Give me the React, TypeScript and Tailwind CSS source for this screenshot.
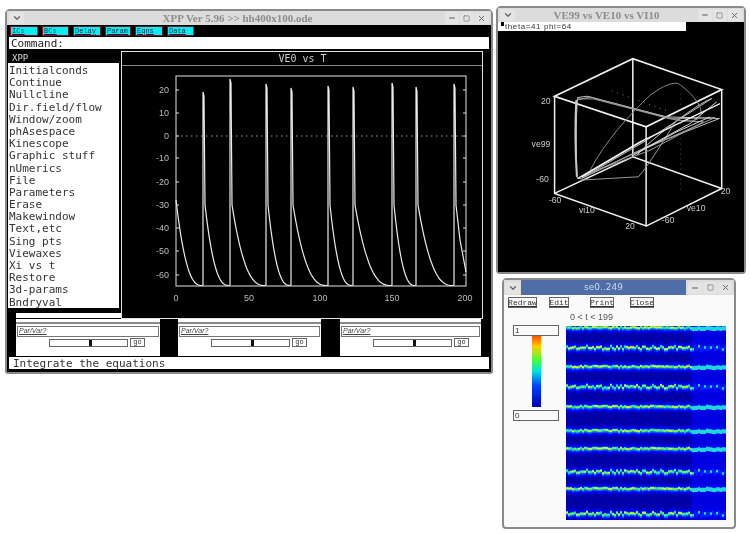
import React from 'react';
import { ChevronDown, Minus, Square, X } from 'lucide-react';

const menuItems = [
  'Initialconds', 'Continue', 'Nullcline', 'Dir.field/flow', 'Window/zoom', 'phAsespace', 'Kinescope',
  'Graphic stuff', 'nUmerics', 'File', 'Parameters', 'Erase', 'Makewindow', 'Text,etc', 'Sing pts',
  'Viewaxes', 'Xi vs t', 'Restore', '3d-params', 'Bndryval',
];

const toolbarItems = [
  { name: 'ICs', w: 'w-[28px]' },
  { name: 'BCs', w: 'w-[27px]' },
  { name: 'Delay', w: 'w-[28px]' },
  { name: 'Param', w: 'w-[26px]' },
  { name: 'Eqns', w: 'w-[28px]' },
  { name: 'Data', w: 'w-[27px]' },
];

// spike x position and peak y, in page pixels
const spikes = [
  [204, 92], [231, 79], [267, 84], [292, 88], [329, 86], [354, 87], [393, 83], [417, 87], [455, 84],
];

function voltagePath() {
  const decay = (x0: number, x1: number, y0: number) => {
    let seg = '';
    for (let x = x0; x <= x1; x += 1.5) {
      const t = (x - x0) / (x1 - x0);
      const y = 285.5 - (285.5 - y0) * Math.pow(1 - t, 2.6);
      seg += ` L${x} ${y.toFixed(1)}`;
    }
    return seg;
  };
  let d = 'M177 200' + decay(177, 203, 200);
  spikes.forEach(([x, top], i) => {
    d += ` L${x} 285 L${x} ${top} L${x + 1} ${top + 4} L${x + 2} 205`;
    if (i < spikes.length - 1) d += decay(x + 2, spikes[i + 1][0] - 1, 205);
    else d += ' L461 240 L467 272';
  });
  return d;
}

function TitleButtons() {
  return (
    <div className="flex items-center gap-[1px]">
      <span className="flex h-[12px] w-[14px] items-center justify-center rounded-[2px] bg-[#e4e4e4]"><Minus size={8} strokeWidth={3} className="text-[#555]" /></span>
      <span className="flex h-[12px] w-[14px] items-center justify-center rounded-[2px] bg-[#e4e4e4]"><Square size={7} strokeWidth={2} className="text-[#666]" /></span>
      <span className="flex h-[12px] w-[14px] items-center justify-center rounded-[2px] bg-[#e4e4e4]"><X size={9} strokeWidth={2.5} className="text-[#666]" /></span>
    </div>
  );
}

function TitleMenu() {
  return (
    <span className="flex h-[12px] w-[15px] items-center justify-center rounded-[2px] bg-[#e4e4e4]">
      <ChevronDown size={10} strokeWidth={3} className="text-[#666]" />
    </span>
  );
}

function ParSlider({ width, thumb }: { width: string; thumb: string }) {
  return (
    <div className={`flex h-[37px] ${width} shrink-0 flex-col bg-white`}>
      <div className="h-[5px] border-b-[2px] border-[#888] bg-white" />
      <div className="mx-[1px] mt-[2px] flex h-[11px] items-center border border-[#777] pl-[1px] font-['Liberation_Sans',sans-serif] text-[7px] italic text-[#444] underline">
        Par/Var?
      </div>
      <div className="mt-[1px] flex items-center">
        <div className={`ml-[33px] flex h-[8px] w-[79px] border border-[#666] ${thumb}`}>
          <span className="h-full w-[3px] bg-[#111]" />
        </div>
        <span className="ml-[2px] flex h-[9px] w-[15px] items-center justify-center border border-[#666] font-['Liberation_Mono',monospace] text-[7px] leading-none text-[#333]">go</span>
      </div>
    </div>
  );
}

function VoltagePlot() {
  const ys = [[20, 90], [10, 113], [0, 136], [-10, 158], [-20, 182], [-30, 205], [-40, 228], [-50, 251], [-60, 275]];
  const xs = [[0, 177], [50, 250], [100, 321], [150, 393], [200, 466]];
  return (
    <svg viewBox="123 66 360 252" className="h-[252px] w-[360px]">
      <rect x="177" y="76" width="290" height="210" fill="none" stroke="#e4e4e4" strokeWidth="1" />
      <line x1="177" y1="136" x2="467" y2="136" stroke="#999" strokeDasharray="1.5 3.5" />
      <path d={voltagePath()} fill="none" stroke="#ececec" strokeWidth="1.2" />
      {ys.map(([v, y]) => (
        <g key={v}>
          <line x1="177" x2="180" y1={y} y2={y} stroke="#ddd" />
          <line x1="464" x2="467" y1={y} y2={y} stroke="#ddd" />
          <text x="170" y={y + 3} textAnchor="end" fontSize="9" fill="#bbb" fontFamily="'Liberation Sans', sans-serif">{v}</text>
        </g>
      ))}
      {xs.map(([v, x]) => (
        <text key={v} x={x} y="301" textAnchor="middle" fontSize="9" fill="#bbb" fontFamily="'Liberation Sans', sans-serif">{v}</text>
      ))}
    </svg>
  );
}

function PhasePlot() {
  return (
    <svg viewBox="24 92 728 718" className="h-[239px] w-[243px]">
      <g fill="none" stroke="#f0f0f0" strokeWidth="5">
        <path d="M193 288 L428 175 L695 268 L468 380 Z" />
        <path d="M193 288 V580 L468 678 V380 M695 268 V565 L468 678 M193 580 L428 470 L695 565 M428 175 V470" strokeWidth="4.5" />
      </g>
      <line x1="572" y1="280" x2="572" y2="575" stroke="#777" strokeWidth="2" strokeDasharray="3 12" />
      <line x1="365" y1="272" x2="540" y2="335" stroke="#777" strokeWidth="3" strokeDasharray="3 14" />
      <g fill="none" stroke="#c4c4c4" strokeWidth="3">
        <path d="M262 292 C256 360 258 470 260 530 C262 540 272 535 290 525 L470 420 L665 295 C620 310 480 420 440 465" />
        <path d="M262 292 L290 288 L530 350 L688 355 L470 440 L275 535" />
        <path d="M258 300 L300 290 L560 360 L640 365 L480 450 L270 530" stroke="#a0a0a0" />
        <path d="M262 296 L310 296 L540 356 L675 352 L500 430 L280 528" stroke="#a0a0a0" />
        <path d="M270 540 L445 530 C480 490 520 420 560 360" stroke="#999" />
        <path d="M430 465 L560 395 L660 350" stroke="#d8d8d8" />
        <path d="M445 455 L600 370 L680 305" stroke="#d8d8d8" />
      </g>
      <path d="M300 510 C340 430 420 340 480 285 C520 255 550 245 565 250 C600 275 640 315 632 345 C620 375 560 360 530 350" fill="none" stroke="#888" strokeWidth="3" />
      <path d="M258 300 C254 380 256 470 260 530" fill="none" stroke="#c8c8c8" strokeWidth="6" />
      <path d="M262 535 L450 425 L690 310 M275 530 L470 415" fill="none" stroke="#f0f0f0" strokeWidth="4" />
      <g fill="#ccc" fontFamily="'Liberation Sans', sans-serif" fontSize="26">
        <text x="152" y="310">20</text>
        <text x="124" y="440">ve99</text>
        <text x="138" y="545">-60</text>
        <text x="176" y="610">-60</text>
        <text x="266" y="640">vi10</text>
        <text x="405" y="686">20</text>
        <text x="515" y="670">-60</text>
        <text x="590" y="632">ve10</text>
        <text x="692" y="582">20</text>
      </g>
    </svg>
  );
}

// small repeatable noise so the raster looks the same on each load
const noise = (a: number, b: number) => {
  const s = Math.sin(a * 12.9898 + b * 78.233) * 43758.5453;
  return s - Math.floor(s);
};

const heatRows = [2, 22, 41, 61, 81, 105, 123, 146, 163, 188];

function Raster() {
  const cols = Array.from({ length: 80 }, (_, i) => i);
  return (
    <div className="h-[194px] w-[160px] overflow-hidden bg-[#0000b4]">
      <svg viewBox="0 0 160 194" preserveAspectRatio="none" className="h-[194px] w-[160px] blur-[0.7px]">
        <rect width="160" height="194" fill="#0000b0" />
        <rect x="126" width="34" height="194" fill="#0000e0" />
        {cols.map((c) => (
          <rect key={c} x={c * 2} width="2" height="194" fill="#000080" opacity={c < 63 ? noise(c, 7) * 0.3 : 0} />
        ))}
        {heatRows.map((y, r) =>
          cols.map((c) => {
            const odd = r % 2 === 1 && r !== 5;
            const sparse = c >= 63 && odd;
            const j = odd ? (noise(c, r % 2) - 0.5) * 3.5 : (noise(c, 3) - 0.5) * 1.5;
            const tail = c >= 63 && !odd;
            return (
              <g key={`${r}-${c}`}>
                <rect x={c * 2} y={y - 5 + j} width="2" height="10" fill="#0000ee" />
                <rect x={c * 2} y={y - 2 + j} width="2" height="4.5" fill={sparse ? '#0020ff' : '#0058ff'} />
                {!sparse || c % 3 === 0 ? (
                  <rect x={c * 2} y={y - 1.5 + j} width="2" height={tail ? 4 : 2.5} fill={tail ? '#20d8d8' : '#20e0b0'} />
                ) : null}
                {!sparse && !tail && noise(c, r) > 0.2 ? (
                  <rect x={c * 2} y={y - 1.2 + j} width="2" height="1.6" fill={noise(c, r + 9) > 0.6 ? '#e8f020' : '#80f040'} />
                ) : null}
              </g>
            );
          })
        )}
      </svg>
    </div>
  );
}

function SmallButton({ label, className }: { label: string; className: string }) {
  return (
    <span className={`flex h-[11px] items-center justify-center border border-[#666] font-['Liberation_Mono',monospace] text-[8px] leading-none text-[#333] underline ${className}`}>
      {label}
    </span>
  );
}

export default function App() {
  return (
    <div className="relative h-[533px] w-[750px] overflow-hidden bg-white font-['DejaVu_Sans_Mono',monospace] blur-[0.4px]">
      {/* main XPP window */}
      <div className="absolute left-[5px] top-[9px] flex h-[365px] w-[488px] flex-col rounded-t-[5px] rounded-b-[3px] border-[2px] border-[#8a8a8a] bg-[#f0f0f0]">
        <div className="flex h-[14px] shrink-0 items-center justify-between bg-[#dcdcdc] px-[2px]">
          <TitleMenu />
          <span className="ml-[6px] font-['Liberation_Serif',serif] text-[11px] font-bold leading-none text-[#8c8c8c]">XPP Ver 5.96 &gt;&gt; hh400x100.ode</span>
          <TitleButtons />
        </div>
        <div className="flex min-h-0 flex-1 flex-col bg-black">
          <div className="flex h-[12px] shrink-0 items-center gap-[4px] pl-[3px]">
            {toolbarItems.map((t) => (
              <span key={t.name} className={`flex h-[10px] ${t.w} items-center border border-[#7a1020] bg-[#00f0f0] pl-[1px] font-['Liberation_Mono',monospace] text-[7px] leading-none text-[#124] underline`}>
                {t.name}
              </span>
            ))}
          </div>
          <div className="mx-[2px] flex h-[12px] shrink-0 items-center bg-white pl-[2px] text-[11px] leading-none text-[#222]">Command:</div>
          <div className="mt-[2px] flex">
            <div className="flex w-[114px] shrink-0 flex-col">
              <div className="flex h-[12px] items-center pl-[5px] pt-[3px] text-[9px] leading-none text-[#ddd]">XPP</div>
              <div className="mr-[2px] ml-[1px] flex h-[245px] flex-col bg-white pl-[1px] pt-[2px]">
                {menuItems.map((m) => (
                  <div key={m} className="h-[12.2px] text-[11px] leading-[12.2px] text-[#333]">{m}</div>
                ))}
              </div>
              <div className="ml-[9px] mt-[5px] h-[5px] bg-white" />
            </div>
            <div className="flex h-[268px] w-[362px] shrink-0 flex-col border border-[#e0e0e0]">
              <div className="flex h-[14px] shrink-0 items-center justify-center border-b border-[#888] pt-[1px] pl-[1px] text-[10px] leading-none text-[#ccc]">VE0 vs T</div>
              <VoltagePlot />
            </div>
          </div>
          <div className="flex">
            <div className="w-[9px] shrink-0" />
            <ParSlider width="w-[144px]" thumb="justify-start pl-[39px]" />
            <div className="w-[18px] shrink-0" />
            <ParSlider width="w-[143px]" thumb="justify-start pl-[39px]" />
            <div className="w-[19px] shrink-0" />
            <ParSlider width="w-[141px]" thumb="justify-start pl-[39px]" />
          </div>
          <div className="mx-[2px] mt-[1px] flex h-[12px] shrink-0 items-center bg-white pl-[4px] text-[11px] leading-none text-[#333]">Integrate the equations</div>
        </div>
      </div>

      {/* 3d plot window */}
      <div className="absolute left-[496px] top-[6px] flex h-[268px] w-[250px] flex-col rounded-t-[5px] rounded-b-[4px] border-[2px] border-[#8a8a8a] bg-[#f0f0f0]">
        <div className="flex h-[14px] shrink-0 items-center justify-between bg-[#dcdcdc] px-[2px]">
          <TitleMenu />
          <span className="font-['Liberation_Serif',serif] text-[11px] font-bold leading-none text-[#8c8c8c]">VE99 vs VE10 vs VI10</span>
          <TitleButtons />
        </div>
        <div className="flex min-h-0 flex-1 flex-col bg-black">
          <div className="relative flex h-[9px] w-[188px] shrink-0 items-center bg-white pl-[7px] font-['Liberation_Sans',sans-serif] text-[8px] leading-[9px] tracking-[0.6px] text-[#333]">
            <span className="absolute left-[3px] top-0 h-[4px] w-[3px] bg-black" />
            theta=41 phi=64
          </div>
          <PhasePlot />
        </div>
      </div>

      {/* raster window */}
      <div className="absolute left-[502px] top-[278px] flex h-[251px] w-[234px] flex-col rounded-t-[5px] rounded-b-[4px] border-[2px] border-[#8a8a8a] bg-[#fafafa]">
        <div className="flex h-[15px] shrink-0 items-center justify-between bg-[#dcdcdc]">
          <span className="px-[1px]"><TitleMenu /></span>
          <span className="flex h-full flex-1 items-center justify-center bg-[#4f6ea8] font-['DejaVu_Sans',sans-serif] text-[9px] leading-none text-[#d0d8e8]">se0..249</span>
          <span className="px-[2px]"><TitleButtons /></span>
        </div>
        <div className="flex h-[13px] items-center pl-[4px] pt-[2px]">
          <SmallButton label="Redraw" className="w-[29px]" />
          <SmallButton label="Edit" className="ml-[12px] w-[20px]" />
          <SmallButton label="Print" className="ml-[21px] w-[24px]" />
          <SmallButton label="Close" className="ml-[16px] w-[24px]" />
        </div>
        <div className="flex flex-1 pl-[9px]">
          <div className="mt-[17px] flex w-[46px] flex-col items-center">
            <div className="flex h-[11px] w-full items-center border border-[#666] pl-[1px] font-['Liberation_Sans',sans-serif] text-[8px] leading-none text-[#333]">1</div>
            <div className="h-[71px] w-[9px] bg-[linear-gradient(to_bottom,#ff5000,#ffd000_15%,#40ff40_35%,#00e0e0_50%,#0040ff_70%,#0000b0)]" />
            <div className="mt-[3px] flex h-[11px] w-full items-center border border-[#666] pl-[1px] font-['Liberation_Sans',sans-serif] text-[8px] leading-none text-[#333]">0</div>
          </div>
          <div className="ml-[7px] flex flex-col">
            <div className="flex h-[18px] items-center pl-[4px] font-['Liberation_Sans',sans-serif] text-[9px] leading-none text-[#555]">0 &lt; t &lt; 199</div>
            <Raster />
          </div>
        </div>
      </div>
    </div>
  );
}
